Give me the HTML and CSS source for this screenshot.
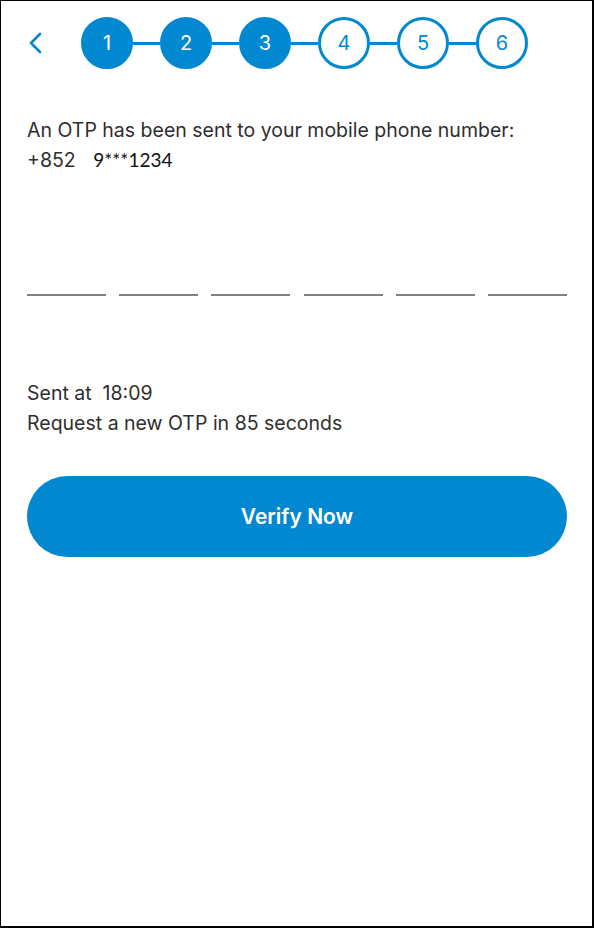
FILE: index.html
```html
<!DOCTYPE html>
<html>
<head>
    <title>Verify OTP</title>
    <link rel="stylesheet" href="styles.css">
</head>
<body>
    <div class="screen">
        <div class="header">
            <button class="back" type="button" aria-label="Back">
                <svg width="14" height="22" viewBox="0 0 14 22">
                    <path d="M12 2 L3 11 L12 20" fill="none" stroke="#0288d1" stroke-width="2.6" stroke-linecap="round" stroke-linejoin="round"/>
                </svg>
            </button>
            <div class="steps">
                <span class="step done">1</span>
                <span class="link"></span>
                <span class="step done">2</span>
                <span class="link"></span>
                <span class="step done">3</span>
                <span class="link"></span>
                <span class="step">4</span>
                <span class="link"></span>
                <span class="step">5</span>
                <span class="link"></span>
                <span class="step">6</span>
            </div>
        </div>

        <div class="message">
            <p>An OTP has been sent to your mobile phone number:</p>
            <p>+852 <span class="phone">9***1234</span></p>
        </div>

        <div class="otp">
            <input type="text" maxlength="1">
            <input type="text" maxlength="1">
            <input type="text" maxlength="1">
            <input type="text" maxlength="1">
            <input type="text" maxlength="1">
            <input type="text" maxlength="1">
        </div>

        <div class="timer">
            <p>Sent at&nbsp; 18:09</p>
            <p>Request a new OTP in 85 seconds</p>
        </div>

        <button class="verify" type="button">Verify Now</button>
    </div>
</body>
</html>
```

FILE: styles.css
```css
html, body {
    margin: 0;
    padding: 0;
    background-color: #ffffff;
}

.screen {
    box-sizing: border-box;
    height: 928px;
    border: 2px solid #000000;
    border-top-width: 1px;
    border-left-width: 1px;
    padding: 0 25px 0 26px;
    font-family: Inter, "Noto Sans", sans-serif;
    color: #2e2e2e;
}

.header {
    display: flex;
    align-items: center;
    height: 84px;
}

.back {
    background: none;
    border: none;
    padding: 0;
    margin-left: 1px;
    width: 53px;
    display: flex;
    align-items: center;
    cursor: pointer;
}

.steps {
    display: flex;
    align-items: center;
}

.step {
    box-sizing: border-box;
    width: 52px;
    height: 52px;
    border-radius: 50%;
    border: 3px solid #0288d1;
    color: #0288d1;
    font-size: 20px;
    display: flex;
    align-items: center;
    justify-content: center;
}

.step.done {
    background-color: #0288d1;
    color: #ffffff;
}

.link {
    width: 27px;
    height: 3px;
    background-color: #0288d1;
}

.message {
    margin-top: 30px;
}

.message p,
.timer p {
    margin: 0;
    font-size: 19.5px;
    line-height: 30px;
}

.phone {
    font-family: Lato, "Open Sans", sans-serif;
    font-size: 19px;
    margin-left: 12px;
    color: #111111;
}

.otp {
    display: flex;
    justify-content: space-between;
    margin-top: 81px;
}

.otp input {
    box-sizing: border-box;
    width: 79px;
    height: 40px;
    border: none;
    border-bottom: 2px solid #808080;
    outline: none;
    text-align: center;
    font-size: 24px;
}

.timer {
    margin-top: 82px;
}

.verify {
    display: block;
    width: 100%;
    height: 81px;
    margin-top: 38px;
    border: none;
    border-radius: 41px;
    background-color: #0288d1;
    color: #ffffff;
    font-family: Inter, "Noto Sans", sans-serif;
    font-size: 21px;
    font-weight: 600;
    cursor: pointer;
}
```
